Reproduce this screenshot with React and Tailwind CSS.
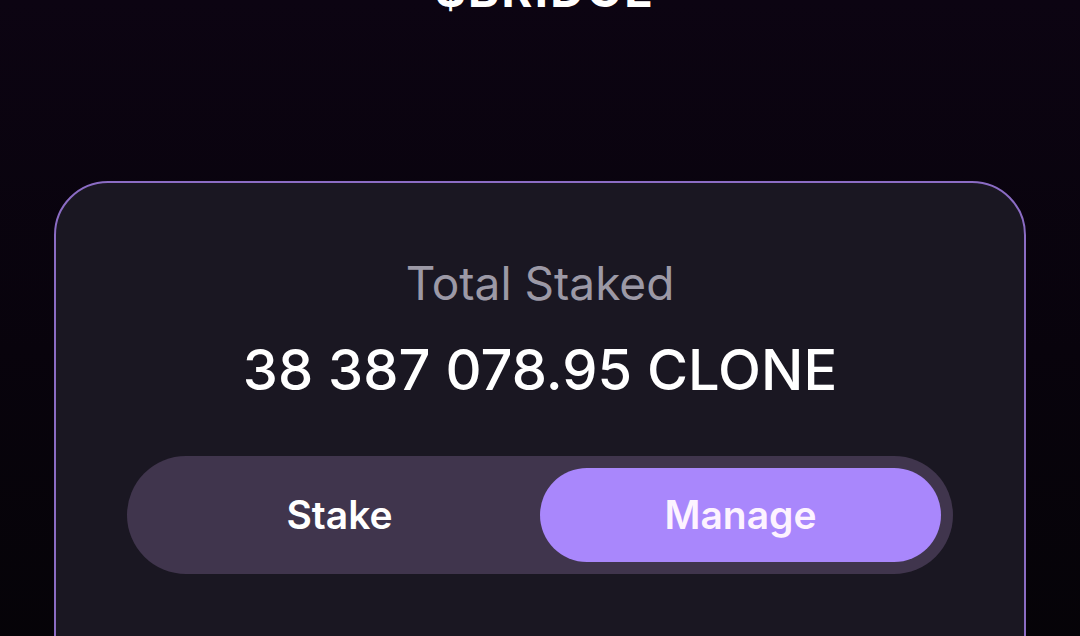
import React, { useState } from 'react';

const App = () => {
  const [tab, setTab] = useState('manage');

  return (
    <div
      className="min-h-screen w-full overflow-hidden bg-gradient-to-b from-[#0c0412] via-[#08030c] to-[#050307]"
      style={{ fontFamily: 'Inter, "Noto Sans", sans-serif' }}
    >
      <div className="flex flex-col items-center">
        <h1 className="mt-[-38px] ml-[10px] text-[47px] leading-[56px] font-bold text-white tracking-wider">$BRIDGE</h1>

        <div className="mt-[163px] w-[972px] h-[520px] rounded-[54px] border-2 border-[#8b6cc4] bg-[#1a1722] px-[71px] pt-[73px]">
          <div className="flex flex-col items-center">
            <p className="text-[46px] leading-[54px] text-[#9c99a6]">Total Staked</p>
            <p className="mt-[26px] text-[56px] leading-[68px] font-medium text-white">38 387 078.95 CLONE</p>
          </div>

          <div className="mt-[52px] grid grid-cols-2 h-[118px] rounded-full bg-[#40354d] p-3">
            <button
              onClick={() => setTab('stake')}
              className={`rounded-full text-[39px] font-semibold ${tab === 'stake' ? 'bg-[#a987fc] text-[#fdf3ff]' : 'text-white'}`}
            >
              Stake
            </button>
            <button
              onClick={() => setTab('manage')}
              className={`rounded-full text-[39px] font-semibold ${tab === 'manage' ? 'bg-[#a987fc] text-[#fdf3ff]' : 'text-white'}`}
            >
              Manage
            </button>
          </div>
        </div>
      </div>
    </div>
  );
};

export default App;
